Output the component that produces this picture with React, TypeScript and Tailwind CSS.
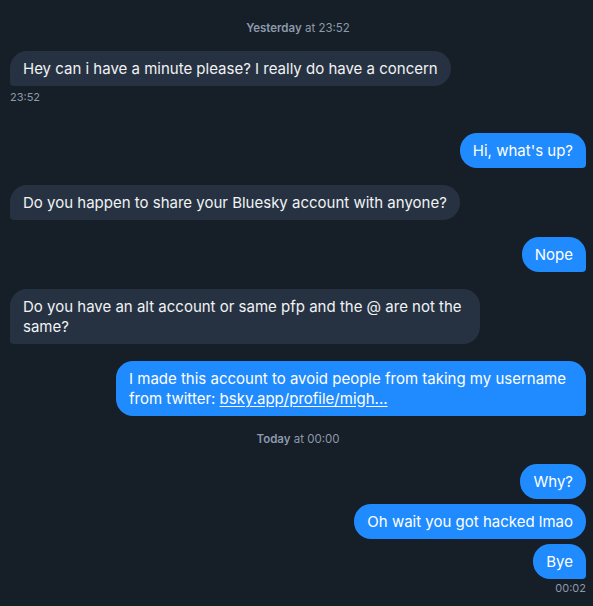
import React from "react";

type Msg = { text: React.ReactNode; mine?: boolean; last?: boolean; mt: string };

const Bubble: React.FC<Msg> = ({ text, mine, last, mt }) => {
  const side = mine
    ? "self-end bg-[#208bfe] text-white"
    : "self-start bg-[#263241] text-[#f1f3f5]";
  const corner = last ? (mine ? "rounded-br-[4px]" : "rounded-bl-[4px]") : "";
  return (
    <div
      className={`${mt} ${side} ${corner} max-w-[470px] rounded-[17px] px-[13px] py-[7.5px] text-[15px] leading-5`}
    >
      {text}
    </div>
  );
};

const Separator: React.FC<{ day: string; time: string; mt: string }> = ({ day, time, mt }) => (
  <div className={`${mt} self-center text-[11.5px] leading-4 text-[#8c9aac]`}>
    <span className="font-semibold">{day}</span> at {time}
  </div>
);

export default function App() {
  return (
    <div className="min-h-screen bg-[#161e27] font-['Inter','Noto_Sans',sans-serif]">
      <div className="flex flex-col pl-[10px] pr-[7px] pt-[20px] pb-[12px]">
        <Separator day="Yesterday" time="23:52" mt="mt-0" />
        <Bubble mt="mt-[15px]" last text="Hey can i have a minute please? I really do have a concern" />
        <div className="mt-[4px] self-start text-[11px] leading-[14px] text-[#8c9aac]">23:52</div>

        <Bubble mt="mt-[29px]" mine last text="Hi, what's up?" />
        <Bubble mt="mt-[17px]" last text="Do you happen to share your Bluesky account with anyone?" />
        <Bubble mt="mt-[17px]" mine last text="Nope" />
        <Bubble
          mt="mt-[17px]"
          last
          text="Do you have an alt account or same pfp and the @ are not the same?"
        />
        <Bubble
          mt="mt-[17px]"
          mine
          last
          text={
            <>
              I made this account to avoid people from taking my username from twitter:{" "}
              <span className="underline underline-offset-2">bsky.app/profile/migh...</span>
            </>
          }
        />

        <Separator day="Today" time="00:00" mt="mt-[15px]" />
        <Bubble mt="mt-[17px]" mine text="Why?" />
        <Bubble mt="mt-[5px]" mine text="Oh wait you got hacked lmao" />
        <Bubble mt="mt-[5px]" mine last text="Bye" />
        <div className="mt-[2px] self-end text-[11px] leading-[14px] text-[#8c9aac]">00:02</div>
      </div>
    </div>
  );
}
